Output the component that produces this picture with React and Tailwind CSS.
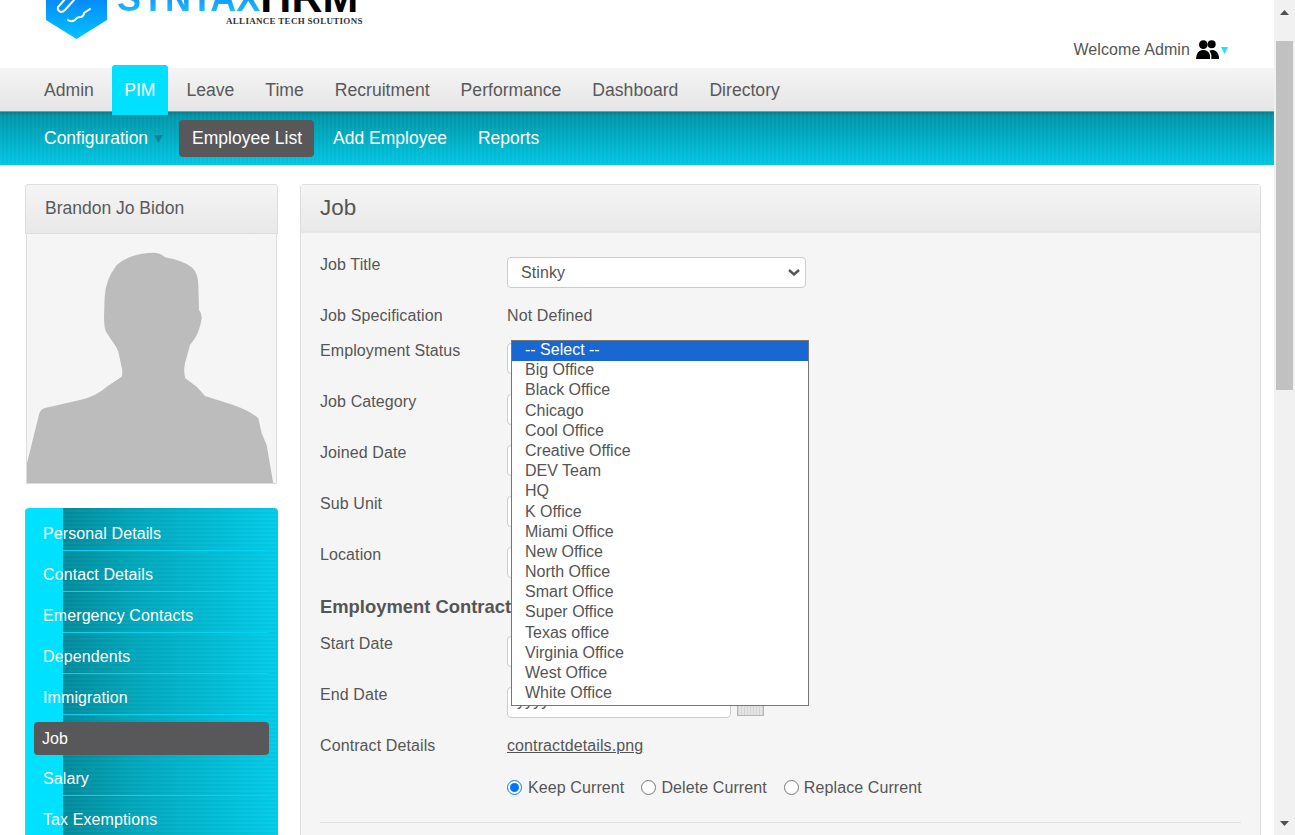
import React from "react";

const topMenu = ["Admin", "PIM", "Leave", "Time", "Recruitment", "Performance", "Dashboard", "Directory"];
const sideMenu = ["Personal Details", "Contact Details", "Emergency Contacts", "Dependents", "Immigration", "Job", "Salary", "Tax Exemptions"];
const locations = [
  "-- Select --", "Big Office", "Black Office", "Chicago", "Cool Office", "Creative Office", "DEV Team", "HQ", "K Office",
  "Miami Office", "New Office", "North Office", "Smart Office", "Super Office", "Texas office", "Virginia Office", "West Office", "White Office",
];
// rows of the open list are not all the same height
const tallRows = [2, 7, 13, 17];

const Logo = () => (
  <div className="flex items-start ml-[46px] -mt-[24px]">
    <svg width="61" height="63" viewBox="0 0 61 63" className="shrink-0">
      <defs>
        <linearGradient id="shield" x1="0" y1="0" x2="0" y2="1">
          <stop offset="0" stopColor="#0b5cf5" />
          <stop offset="1" stopColor="#00c4ff" />
        </linearGradient>
      </defs>
      <polygon points="30.5,-8 61,8 61,44 30.5,63 0,44 0,8" fill="url(#shield)" />
      <path d="M20 22 L12 31 Q11 35 15 36 Q17 36 19 34 L28 24" fill="none" stroke="#fff" strokeWidth="2" strokeLinecap="round" />
      <path d="M22 44 Q26 47 30 43 Q31 41 35 41 Q38 40 38 37 L44 33" fill="none" stroke="#fff" strokeWidth="2" strokeLinecap="round" />
    </svg>
    <div className="relative ml-[10px] flex h-[39px] items-end whitespace-nowrap">
      <span className="mb-[-1px] text-[36px] leading-[34px] font-bold bg-[linear-gradient(180deg,#0a6cf5,#1ec8ff)] bg-clip-text text-transparent">SYNTAX</span>
      <span className="text-[43px] leading-[37px] font-bold text-black mb-[-1px]">HRM</span>
      <span className="absolute left-[109px] top-[40px] font-['Liberation_Serif',serif] text-[9px] leading-[10px] font-bold tracking-[0.3px] text-[#333]">ALLIANCE TECH SOLUTIONS</span>
    </div>
  </div>
);

const PeopleIcon = () => (
  <svg width="23" height="19" viewBox="468 120 69 57" className="ml-[6px]">
    <circle cx="490" cy="134" r="13" fill="#000" />
    <circle cx="515" cy="133" r="12" fill="#000" />
    <path d="M468 177 L470 165 Q475 150 490 150 Q505 150 510 165 L510 177 Z" fill="#000" />
    <path d="M514 177 L514 165 Q512 157 508 152 Q515 149 520 150 Q533 152 537 170 L537 177 Z" fill="#000" />
  </svg>
);

const Header = () => (
  <div className="flex h-[68px] justify-between overflow-hidden bg-white">
    <Logo />
    <div className="flex h-[19px] mt-[40px] mr-[46px] items-center text-[16px] tracking-[0.1px] text-[#555]">
      <span>Welcome Admin</span>
      <PeopleIcon />
      <svg width="7" height="7" viewBox="0 0 7 7" className="ml-[2px] mt-[1px]"><polygon points="0,0 7,0 3.5,7" fill="#1ee2ff" /></svg>
    </div>
  </div>
);

const TopNav = () => (
  <ul className="relative z-10 flex h-[44px] gap-[5px] pl-[31px] border-b border-b-[#6aa0a9] bg-[linear-gradient(180deg,#f5f5f5,#e5e5e5)] text-[17.6px]">
    {topMenu.map((item) =>
      item === "PIM" ? (
        <li key={item} className="-mt-[3px] mr-[0.5px] flex h-[50px] w-[56px] items-center justify-center rounded-t-[3px] bg-[#00e1ff] text-white">{item}</li>
      ) : (
        <li key={item} className="flex h-[44px] items-center px-[13px] text-[#58595b]">{item}</li>
      )
    )}
  </ul>
);

const SubNav = () => (
  <ul className="flex h-[53px] gap-[5px] pl-[31px] pt-[8px] text-[17.5px] text-white bg-[repeating-linear-gradient(90deg,rgba(255,255,255,0.035)_0_2px,transparent_2px_4px),linear-gradient(180deg,#007f8f,#0096a9_8%,#00c6e2)]">
    <li className="flex h-[37px] items-center pl-[13px] pr-[11px]">
      Configuration
      <svg width="9" height="8" viewBox="0 0 9 8" className="ml-[6px] mt-[1px]"><polygon points="0,0 9,0 4.5,8" fill="#0a8797" /></svg>
    </li>
    <li className="mr-[1px] flex h-[37px] w-[135px] items-center rounded-[4px] bg-[#58585a] pl-[13px]">Employee List</li>
    <li className="flex h-[37px] items-center px-[13px]">Add Employee</li>
    <li className="flex h-[37px] items-center px-[13px]">Reports</li>
  </ul>
);

const ProfileCard = () => (
  <div>
    <div className="flex h-[50px] items-center rounded-t-[3px] border border-[#ddd] bg-[linear-gradient(180deg,#f5f5f5,#e8e8e8)] pb-[2px] pl-[19px] text-[17.5px] text-[#58595b]">Brandon Jo Bidon</div>
    <div className="mx-[1px] h-[250px] border-x border-b border-[#ddd] bg-[#f5f5f5]">
      <svg viewBox="81 192 747 747" preserveAspectRatio="none" className="block h-full w-full">
        <path
          fill="#bcbcbc"
          d="M81 940 L81 880 L118 730 Q122 718 135 714 L240 690 Q290 678 320 650 L365 620 Q368 610 366 596 L355 545 Q350 530 340 518 L318 485 Q312 470 312 440 L314 380 Q316 330 350 285 Q390 250 460 248 Q482 248 495 262 Q550 272 575 292 Q595 310 595 345 L597 420 Q606 430 605 445 Q600 480 585 505 L570 525 L555 580 Q550 605 556 625 L590 650 L615 678 L700 705 Q755 725 775 745 L785 790 L800 825 L806 860 L820 940 Z"
        />
      </svg>
    </div>
  </div>
);

const SideMenu = () => (
  <ul className="mt-[24px] h-[400px] rounded-t-[4px] px-[9px] pt-[2px] text-[16px] tracking-[0.1px] text-white bg-[linear-gradient(90deg,#00e1ff_38px,transparent_38px),repeating-linear-gradient(0deg,rgba(255,255,255,0.04)_0_2px,transparent_2px_4px),linear-gradient(90deg,#00899a_38px,#00a6bb_45%,#00cae6)]">
    {sideMenu.map((item) =>
      item === "Job" ? (
        <li key={item} className="pt-[7px]">
          <div className="flex h-[33px] items-center rounded-[4px] bg-[#58585a] pl-[8px]">{item}</div>
        </li>
      ) : (
        <li key={item} className="pt-[7px]">
          <div className="flex h-[33px] items-center pl-[9px]">{item}</div>
          <div className="ml-[29px] mr-[1px] h-px bg-[#00d6f2]" />
        </li>
      )
    )}
  </ul>
);

const Control = ({ value = "-- Select --" }) => (
  <div className="relative w-[299px]">
    <select className="block h-[31px] w-full appearance-none rounded-[4px] border border-[#ccc] bg-white pl-[13px] text-[#555]">
      <option>{value}</option>
    </select>
    <svg width="12" height="7" viewBox="0 0 12 7" className="pointer-events-none absolute right-[6px] top-[12px]">
      <polyline points="1,1 6,5.5 11,1" fill="none" stroke="#555" strokeWidth="2.4" />
    </svg>
  </div>
);

const DateField = () => (
  <div className="flex items-start">
    <div className="flex h-[31px] w-[224px] items-center rounded-[4px] border border-[#ccc] bg-white pb-[4px] pl-[9px] text-[#555]">yyyy-mm-dd</div>
    <div className="ml-[6px] mt-[2px] h-[27px] w-[27px] border border-[#b5b5b5] bg-[repeating-linear-gradient(90deg,#d4d4d4_0_1px,#e4e4e4_1px_3px)]" />
  </div>
);

const FormRow = ({ label, children, className = "h-[51px]" }) => (
  <div className={`flex ${className}`}>
    <div className="w-[187px] shrink-0 leading-[14px]">{label}</div>
    <div className="relative -mt-px flex-1">{children}</div>
  </div>
);

const LocationList = () => (
  <div className="absolute left-[4px] top-[-3px] z-20 w-[298px] border border-[#767676] bg-white tracking-normal">
    {locations.map((name, i) => (
      <div
        key={name}
        className={`pl-[13px] leading-[18px] ${tallRows.includes(i) ? "h-[21px]" : "h-[20px]"} ${i === 0 ? "bg-[#1967d2] text-white" : "text-[#555]"}`}
      >
        {name}
      </div>
    ))}
  </div>
);

const Radio = ({ label, checked, className = "", labelClass = "ml-[5px]" }) => (
  <label className={`flex items-center ${className}`}>
    <input type="radio" name="contract" defaultChecked={checked} className="h-[15px] w-[15px]" />
    <span className={labelClass}>{label}</span>
  </label>
);

const JobPanel = () => (
  <div className="flex-1 rounded-t-[4px] border-x border-t border-[#ddd] bg-[#f5f5f5] text-[16px] tracking-[0.1px] text-[#555]">
    <div className="flex h-[48px] items-center border-b-2 border-[#e6e6e6] bg-[linear-gradient(180deg,#f5f5f5,#e9e9e9)] pl-[19px] text-[22.4px]">Job</div>
    <div className="pl-[19px] pr-[19px] pt-[25px]">
      <FormRow label="Job Title"><Control value="Stinky" /></FormRow>
      <FormRow label="Job Specification" className="h-[35px]">
        <div className="mt-px leading-[14px]">Not Defined</div>
      </FormRow>
      <FormRow label="Employment Status">
        <Control />
        <LocationList />
      </FormRow>
      <FormRow label="Job Category"><Control /></FormRow>
      <FormRow label="Joined Date"><DateField /></FormRow>
      <FormRow label="Sub Unit"><Control /></FormRow>
      <FormRow label="Location"><Control /></FormRow>
      <div className="h-[38px] text-[18.4px] leading-[16px] font-bold tracking-normal">Employment Contract</div>
      <FormRow label="Start Date"><DateField /></FormRow>
      <FormRow label="End Date"><DateField /></FormRow>
      <FormRow label="Contract Details" className="h-[41px]">
        <a className="mt-px block leading-[14px] underline">contractdetails.png</a>
      </FormRow>
      <div className="flex pl-[187px] leading-[14px]">
        <Radio label="Keep Current" checked labelClass="ml-[6px]" />
        <Radio label="Delete Current" className="ml-[17px]" />
        <Radio label="Replace Current" className="ml-[17px]" />
      </div>
      <div className="mt-[27px] h-px bg-[#e0e0e0]" />
    </div>
  </div>
);

const Scrollbar = () => (
  <div className="flex h-full w-[21px] shrink-0 flex-col items-center bg-[#f1f1f1]">
    <svg width="9" height="5" viewBox="0 0 9 5" className="mt-[10px]"><polygon points="4.5,0 9,5 0,5" fill="#505050" /></svg>
    <div className="mt-[26px] h-[349px] w-[17px] bg-[#c1c1c1]" />
    <svg width="9" height="5" viewBox="0 0 9 5" className="mt-[431px]"><polygon points="0,0 9,0 4.5,5" fill="#505050" /></svg>
  </div>
);

export default function App() {
  return (
    <div className="flex h-[835px] w-[1295px] overflow-hidden bg-white font-['Liberation_Sans',Arial,sans-serif]">
      <div className="w-[1274px] shrink-0">
        <Header />
        <TopNav />
        <SubNav />
        <div className="flex gap-[22px] pl-[25px] pr-[13px] pt-[19px]">
          <div className="w-[253px] shrink-0">
            <ProfileCard />
            <SideMenu />
          </div>
          <JobPanel />
        </div>
      </div>
      <Scrollbar />
    </div>
  );
}
